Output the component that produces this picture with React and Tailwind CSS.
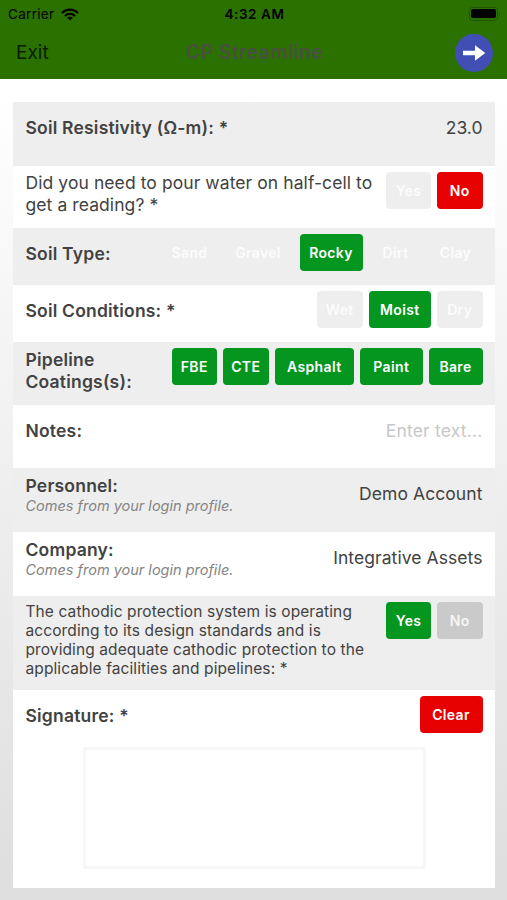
import React, { useState } from 'react'

const tones = {
  green: 'bg-[#04961f] text-white',
  red: 'bg-[#e60000] text-white',
  grey: 'bg-[#cacaca] text-[#f6f6f6]',
  off: 'bg-[#eeeeee] text-[#fcfcfc]'
}

const Choice = ({ tone, width, onClick, children }) => (
  <button
    type="button"
    onClick={onClick}
    className={`h-[37px] shrink-0 rounded-[4px] text-center text-[14px] font-semibold tracking-[0.35px] ${width} ${tones[tone]}`}
  >
    {children}
  </button>
)

const Row = ({ className, children }) => (
  <div className={`flex shrink-0 items-start justify-between pl-[12.5px] pr-[12.5px] ${className}`}>
    {children}
  </div>
)

const Label = ({ className = '', children }) => (
  <div className={`text-[17.5px] font-semibold leading-[22px] tracking-[0.2px] ${className}`}>{children}</div>
)

const ProfileRow = ({ label, value, className }) => (
  <Row className={className}>
    <div className="pt-[7px]">
      <Label>{label}</Label>
      <div className="text-[14.5px] italic leading-[17px] text-[#858585]">Comes from your login profile.</div>
    </div>
    <div className="pt-[15px] text-[17.5px] leading-[22px] tracking-[0.07px]">{value}</div>
  </Row>
)

const StatusBar = () => (
  <div className="flex h-[28px] items-center text-black">
    <div className="flex flex-1 items-center gap-[7px] pl-[8px] text-[13.5px] tracking-[0.3px]">
      Carrier
      <svg width="18" height="13" viewBox="0 0 18 13" fill="none" stroke="currentColor" strokeWidth="2.2">
        <path d="M1 5C5.6 .5 12.4 .5 17 5" />
        <path d="M4 8C7 5.1 11 5.1 14 8" />
        <path d="M9 12.6L6.2 9.8C7.8 8.4 10.2 8.4 11.8 9.8Z" fill="currentColor" stroke="none" />
      </svg>
    </div>
    <div className="text-[13.5px] font-semibold tracking-[0.6px]">4:32 AM</div>
    <div className="flex flex-1 justify-end pr-[6px]">
      <svg width="32" height="14" viewBox="0 0 32 14">
        <rect x=".5" y=".5" width="28" height="13" rx="3" fill="none" stroke="#215500" />
        <rect x="2" y="2" width="25" height="9" rx="2" fill="#000" />
        <path d="M30 5V9C31.3 8.4 31.3 5.6 30 5Z" fill="#215500" />
      </svg>
    </div>
  </div>
)

const Header = ({ title }) => (
  <div className="h-[79px] shrink-0 bg-[#2b7100]">
    <StatusBar />
    <div className="flex h-[49px] items-center pl-[16px] pr-[14px]">
      <div className="flex-1 pt-px text-[19px] text-[#0b1c00]">Exit</div>
      <div className="pt-px text-[19.5px] font-semibold tracking-[0.35px] text-[#48503f]">{title}</div>
      <div className="flex flex-1 justify-end">
        <button type="button" aria-label="Next" className="flex size-[38px] items-center justify-center rounded-full bg-[#414fb4]">
          <svg width="24" height="18" viewBox="0 0 24 18" fill="#fff">
            <path d="M1 6.7H13V1.2L23.3 9L13 16.8V11.3H1Z" />
          </svg>
        </button>
      </div>
    </div>
  </div>
)

const App = () => {
  const [water, setWater] = useState('No')
  const [soil, setSoil] = useState('Rocky')
  const [condition, setCondition] = useState('Moist')
  const [coatings, setCoatings] = useState(['FBE', 'CTE', 'Asphalt', 'Paint', 'Bare'])
  const [adequate, setAdequate] = useState('Yes')

  const soilTypes = [
    { name: 'Sand', width: 'w-[54px]' },
    { name: 'Gravel', width: 'w-[71px]' },
    { name: 'Rocky', width: 'w-[63px]' },
    { name: 'Dirt', width: 'w-[54px]' },
    { name: 'Clay', width: 'w-[54px]' }
  ]

  const conditions = [
    { name: 'Wet', width: 'w-[45.5px]' },
    { name: 'Moist', width: 'w-[62.5px]' },
    { name: 'Dry', width: 'w-[45.5px]' }
  ]

  const coatingTypes = [
    { name: 'FBE', width: 'w-[45.5px]' },
    { name: 'CTE', width: 'w-[45.5px]' },
    { name: 'Asphalt', width: 'w-[79.5px]' },
    { name: 'Paint', width: 'w-[62.5px]' },
    { name: 'Bare', width: 'w-[54px]' }
  ]

  const toggleCoating = (name) => {
    setCoatings(coatings.includes(name) ? coatings.filter(c => c !== name) : [...coatings, name])
  }

  return (
    <div className="flex h-[900px] w-[507px] flex-col overflow-hidden bg-linear-to-b from-white from-10% to-[#dedede] font-['Inter','Liberation_Sans',sans-serif] text-[#424242]">
      <Header title="CP Streamline" />
      <div className="ml-[13px] mr-[12px] mt-[23px] flex flex-col">
        <Row className="h-[64px] bg-[#eeeeee] pt-[15px]">
          <Label>Soil Resistivity (Ω-m): *</Label>
          <div className="text-[17.5px] leading-[22px]">23.0</div>
        </Row>

        <Row className="h-[62px] bg-white pt-[6px]">
          <div className="text-[17.5px] leading-[22px] tracking-[0.08px]">
            Did you need to pour water on half-cell to
            <br />
            get a reading? *
          </div>
          <div className="flex gap-[6px]">
            <Choice tone={water === 'Yes' ? 'green' : 'off'} width="w-[45px]" onClick={() => setWater('Yes')}>Yes</Choice>
            <Choice tone={water === 'No' ? 'red' : 'off'} width="w-[45.5px]" onClick={() => setWater('No')}>No</Choice>
          </div>
        </Row>

        <Row className="h-[57px] bg-[#eeeeee] pt-[6px]">
          <Label className="pt-[9px]">Soil Type:</Label>
          <div className="flex gap-[6px]">
            {soilTypes.map((s) => (
              <Choice key={s.name} tone={soil === s.name ? 'green' : 'off'} width={s.width} onClick={() => setSoil(s.name)}>
                {s.name}
              </Choice>
            ))}
          </div>
        </Row>

        <Row className="h-[57px] bg-white pt-[6px]">
          <Label className="pt-[9px]">Soil Conditions: *</Label>
          <div className="flex gap-[6px]">
            {conditions.map((c) => (
              <Choice key={c.name} tone={condition === c.name ? 'green' : 'off'} width={c.width} onClick={() => setCondition(c.name)}>
                {c.name}
              </Choice>
            ))}
          </div>
        </Row>

        <Row className="h-[63px] bg-[#eeeeee] pt-[6px]">
          <Label className="w-[120px] pt-px">Pipeline Coatings(s):</Label>
          <div className="flex gap-[6px]">
            {coatingTypes.map((c) => (
              <Choice key={c.name} tone={coatings.includes(c.name) ? 'green' : 'off'} width={c.width} onClick={() => toggleCoating(c.name)}>
                {c.name}
              </Choice>
            ))}
          </div>
        </Row>

        <Row className="h-[63px] bg-white pt-[15px]">
          <Label>Notes:</Label>
          <div className="text-[17.5px] leading-[22px] tracking-[0.2px] text-[#c7c7c7]">Enter text...</div>
        </Row>

        <ProfileRow className="h-[64px] bg-[#eeeeee]" label="Personnel:" value="Demo Account" />
        <ProfileRow className="h-[64px] bg-white" label="Company:" value="Integrative Assets" />

        <Row className="h-[94px] bg-[#eeeeee] pt-[6px]">
          <div className="text-[15.5px] leading-[19px] tracking-[0.1px]">
            The cathodic protection system is operating
            <br />
            according to its design standards and is
            <br />
            providing adequate cathodic protection to the
            <br />
            applicable facilities and pipelines: *
          </div>
          <div className="flex gap-[6px]">
            <Choice tone={adequate === 'Yes' ? 'green' : 'grey'} width="w-[45px]" onClick={() => setAdequate('Yes')}>Yes</Choice>
            <Choice tone={adequate === 'No' ? 'red' : 'grey'} width="w-[45.5px]" onClick={() => setAdequate('No')}>No</Choice>
          </div>
        </Row>

        <div className="h-[198px] bg-white">
          <Row className="pt-[6px]">
            <Label className="pt-[9px]">Signature: *</Label>
            <Choice tone="red" width="w-[63px]">Clear</Choice>
          </Row>
          <div className="mx-auto mt-[14px] h-[122px] w-[343px] border-[3px] border-[#f7f7f7]" />
        </div>
      </div>
    </div>
  )
}

export default App
